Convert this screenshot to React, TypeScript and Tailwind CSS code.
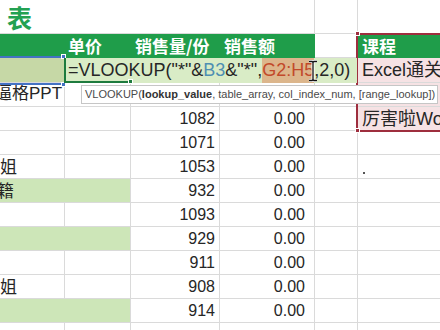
const rows = [
  { a: "", c: "1082", green: false },
  { a: "", c: "1071", green: false },
  { a: "姐", c: "1053", green: false },
  { a: "籍", c: "932", green: true },
  { a: "", c: "1093", green: false },
  { a: "", c: "929", green: true },
  { a: "", c: "911", green: false },
  { a: "姐", c: "908", green: false },
  { a: "", c: "914", green: true },
];

const pinkText: Record<number, string> = {
  0: "厉害啦Word",
};

export default function App() {
  return (
    <div className="relative w-[440px] h-[330px] overflow-hidden bg-white text-[#262626] font-['Liberation_Sans','Noto_Sans_CJK_SC',sans-serif]">
      {/* title row */}
      <div className="flex h-[34px] border-b border-[#dadada]">
        <div className="w-[315px] border-r border-[#dadada] pl-[7px] pt-[1px] text-[25px] leading-[32px] font-bold text-[#23a152] font-['Noto_Sans_CJK_SC',sans-serif]">
          表
        </div>
        <div className="w-[43px] border-r border-[#dadada]" />
        <div className="flex-1" />
      </div>

      {/* header row */}
      <div className="flex h-[24px] text-[17px] font-bold text-white font-['Noto_Sans_CJK_SC',sans-serif]">
        <div className="flex w-[315px] items-center bg-[#1f9d4a]">
          <div className="w-[65px]" />
          <div className="w-[66px] pl-[3px]">单价</div>
          <div className="w-[89px] pl-[4px]">销售量/份</div>
          <div className="w-[95px] pl-[4px]">销售额</div>
        </div>
        <div className="w-[43px] border-r border-b border-[#dadada]" />
        <div className="flex flex-1 items-center bg-[#1f9d4a] pl-[4px]">课程</div>
      </div>

      {/* formula row */}
      <div className="flex h-[25px] border-b border-[#dadada]">
        <div className="w-[65px] bg-[#c6d8a6]" />
        <div className="w-[66px] border-r border-[#dadada]" />
        <div className="w-[89px] border-r border-[#dadada]" />
        <div className="w-[95px] border-r border-[#dadada]" />
        <div className="w-[43px] border-r border-[#dadada]" />
        <div className="flex flex-1 items-end overflow-hidden whitespace-nowrap bg-[#f6e2e4] pl-[4px] pb-[1px] text-[18px] leading-[22px]">
          Excel通关秘籍
        </div>
      </div>

      {/* row under the formula, with tooltip over it */}
      <div className="flex h-[24px] border-b border-[#dadada]">
        <div className="w-[65px] overflow-hidden whitespace-nowrap border-r border-[#dadada] text-[17px] leading-[22px]">
          <span className="-ml-[5px] block">逼格PPT</span>
        </div>
        <div className="w-[66px] border-r border-[#dadada]" />
        <div className="w-[89px] border-r border-[#dadada]" />
        <div className="w-[95px] border-r border-[#dadada]" />
        <div className="w-[43px] border-r border-[#dadada]" />
        <div className="flex-1 bg-[#f6e2e4]" />
      </div>

      {/* data rows */}
      {rows.map((r, i) => (
        <div key={i} className="flex h-[24px] border-b border-[#dadada] text-[16px] leading-[22px]">
          <div
            className={`w-[65px] overflow-hidden whitespace-nowrap border-r text-[17px] font-['Noto_Sans_CJK_SC',sans-serif] leading-[22px] ${
              r.green ? "bg-[#cde6b8] border-[#cde6b8]" : "border-[#dadada]"
            }`}
          >
            <span className={r.a === "籍" ? "-ml-[3px] block" : "block"}>{r.a}</span>
          </div>
          <div className={`w-[66px] border-r border-[#dadada] ${r.green ? "bg-[#cde6b8]" : ""}`} />
          <div className="flex w-[89px] items-end justify-end border-r border-[#dadada] pr-[4px]">{r.c}</div>
          <div className="flex w-[95px] items-end justify-end border-r border-[#dadada] pr-[9px]">0.00</div>
          <div className="w-[43px] border-r border-[#dadada]" />
          <div
            className={`flex flex-1 items-end overflow-hidden whitespace-nowrap pl-[4px] text-[18px] ${
              i === 0 ? "bg-[#f6e2e4]" : ""
            }`}
          >
            {pinkText[i] ?? ""}
            {i === 2 && <span className="mb-[4px] ml-[1px] h-[2px] w-[2px] bg-[#555]" />}
          </div>
        </div>
      ))}

      {/* last partial row */}
      <div className="flex h-[24px]">
        <div className="w-[65px] border-r border-[#dadada]" />
        <div className="w-[66px] border-r border-[#dadada]" />
        <div className="w-[89px] border-r border-[#dadada]" />
        <div className="w-[95px] border-r border-[#dadada]" />
        <div className="w-[43px] border-r border-[#dadada]" />
        <div className="flex-1" />
      </div>

      {/* selection box on the 课程 column */}
      <div className="absolute left-[356px] top-[33px] h-[99px] w-[100px] border-2 border-[#9e2e3e]" />
      <div className="absolute left-[355px] top-[31px] h-[5px] w-[5px] border border-white bg-[#9e2e3e]" />
      <div className="absolute left-[355px] top-[128px] h-[5px] w-[5px] border border-white bg-[#9e2e3e]" />

      {/* selection on A of the formula row */}
      <div className="absolute left-0 top-[56px] h-[29px] w-[65px] border-y-2 border-[#4472c4]" />
      <div className="absolute left-[61px] top-[54px] h-[5px] w-[5px] border border-white bg-[#4472c4]" />
      <div className="absolute left-[61px] top-[82px] h-[5px] w-[5px] border border-white bg-[#4472c4]" />

      {/* in-cell editor */}
      <div className="absolute left-[64px] top-[58px] flex h-[25px] w-[293px] items-stretch whitespace-nowrap border-l-2 border-[#1e7b3e] bg-[#d9ecc6] pl-[2px] text-[18px] leading-[24px]">
        <span>=VLOOKUP("*"&amp;</span>
        <span className="text-[#4e8fb2]">B3</span>
        <span>&amp;"*",</span>
        <span className="bg-[#dcb68c] text-[#c2492a]">G2:H5</span>
        <span>,2,0)</span>
      </div>
      <div className="absolute left-[64px] top-[81px] h-[2px] w-[67px] bg-[#1e7b3e]" />
      <div className="absolute left-[128px] top-[79px] h-[5px] w-[5px] border border-white bg-[#1e7b3e]" />

      {/* mouse I-beam */}
      <svg className="absolute left-[307px] top-[60px]" width="12" height="22" viewBox="0 0 12 22">
        <path d="M2 1.5h3.2l0.8 1 0.8-1H10M6 2.5v17M2 20.5h3.2l0.8-1 0.8 1H10" fill="none" stroke="#fff" strokeWidth="3" />
        <path d="M2 1.5h3.2l0.8 1 0.8-1H10M6 2.5v17M2 20.5h3.2l0.8-1 0.8 1H10" fill="none" stroke="#111" strokeWidth="1.3" />
      </svg>

      {/* function tooltip */}
      <div className="absolute left-[81px] top-[85px] flex h-[19px] w-[357px] items-center overflow-hidden whitespace-nowrap border border-[#c6c6c6] bg-white pl-[3px] text-[11px] text-[#4a4a4a]">
        VLOOKUP(<b className="text-[#333]">lookup_value</b>, table_array, col_index_num, [range_lookup])
      </div>
    </div>
  );
}
